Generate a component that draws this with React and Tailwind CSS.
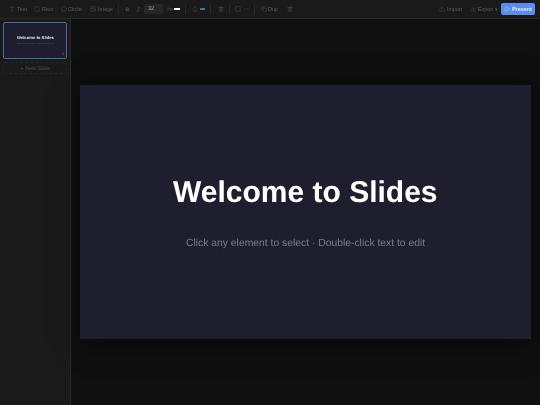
import React from 'react';
import { Type, Square, Circle, Image, Bold, Italic, Droplet, Trash2, Copy, Upload, Download, Play, ALargeSmall } from 'lucide-react';

function ToolButton({ icon: Icon, label }) {
    return (
        <button className="flex items-center gap-[1.5px] h-[14px] px-[3px] text-[5.4px] text-[#5c5c5c]">
            <Icon size={6} strokeWidth={1.5} />
            <span className="will-change-transform">{label}</span>
        </button>
    );
}

function Divider({ className }) {
    return <div className={`w-px h-[9px] bg-[#2a2a2a] ${className}`} />;
}

export default function App() {
    return (
        <div className="w-[540px] h-[405px] overflow-hidden flex flex-col bg-[#0f0f0f] font-['Liberation_Sans',sans-serif] [text-rendering:geometricPrecision]">
            {/* Toolbar */}
            <div className="h-[19px] flex items-center pl-[6px] pr-[5px] bg-[#1a1a1a] border-b border-[#2a2a2a] shrink-0">
                <div className="flex items-center gap-[2px]">
                    <ToolButton icon={Type} label="Text" />
                    <ToolButton icon={Square} label="Rect" />
                    <ToolButton icon={Circle} label="Circle" />
                    <ToolButton icon={Image} label="Image" />
                </div>
                <Divider className="ml-[2px]" />
                <Bold size={5} strokeWidth={2.5} className="text-[#5c5c5c] ml-[6px]" />
                <Italic size={5} strokeWidth={2} className="text-[#5c5c5c] ml-[6px]" />
                <div className="w-[19px] h-[10px] rounded-[2px] bg-[#262626] ml-[3px] flex items-center pl-[4px] text-[5.5px] text-[#a8a8a8]">
                    <span className="will-change-transform">32</span>
                </div>
                <ALargeSmall size={6} strokeWidth={1.5} className="text-[#5c5c5c] ml-[4px]" />
                <div className="w-[5.5px] h-[2px] bg-white ml-[1.5px]" />
                <Divider className="ml-[5.5px]" />
                <Droplet size={6} strokeWidth={1.5} className="text-[#5c5c5c] ml-[6px]" />
                <div className="w-[5.5px] h-[2px] bg-[#4a6fa5] ml-[1.5px]" />
                <Divider className="ml-[4.5px]" />
                <Trash2 size={6} strokeWidth={1.5} className="text-[#5c5c5c] ml-[7px]" />
                <Divider className="ml-[5px]" />
                <Square size={6} strokeWidth={1.5} className="text-[#5c5c5c] ml-[5.5px]" />
                <div className="w-[5.5px] h-[2px] bg-[#1e2233] ml-[2.5px]" />
                <Divider className="ml-[4.5px]" />
                <div className="ml-[3px]">
                    <ToolButton icon={Copy} label="Dup" />
                </div>
                <Trash2 size={6} strokeWidth={1.5} className="text-[#5c5c5c] ml-[5.5px]" />
                <div className="flex-1" />
                <ToolButton icon={Upload} label="Import" />
                <div className="w-[2px]" />
                <ToolButton icon={Download} label="Export ▾" />
                <button className="flex items-center gap-[1.5px] h-[12px] px-[3.5px] rounded-[2px] bg-[#5b8def] text-[#e8eefc] text-[5.4px] font-semibold">
                    <Play size={6} strokeWidth={1.5} />
                    <span className="will-change-transform">Present</span>
                </button>
            </div>

            <div className="flex-1 flex min-h-0">
                {/* Slide list */}
                <div className="w-[71px] shrink-0 bg-[#1a1a1a] border-r border-[#2a2a2a] p-[3px] flex flex-col gap-[3px]">
                    <div className="relative h-[37px] rounded-[2px] border border-[#4a6a9f] bg-[#1e1e2e] flex flex-col items-center justify-center">
                        <div className="text-[4.2px] font-bold text-[#e6e6e6] will-change-transform">Welcome to Slides</div>
                        <div className="mt-[3px] text-[1.6px] text-[#707070] will-change-transform">Click any element to select · Double-click text to edit</div>
                        <span className="absolute right-[2px] bottom-[1px] text-[3.5px] text-[#808080]">1</span>
                    </div>
                    <button className="h-[12px] rounded-[2px] border border-dashed border-[#262626] text-[5.5px] text-[#4d4d4d]">
                        <span className="will-change-transform">+ New Slide</span>
                    </button>
                </div>

                {/* Canvas */}
                <div className="flex-1 flex items-center justify-center">
                    <div className="w-[451px] h-[254px] bg-[#1e1e2e] shadow-[0_4px_24px_rgba(0,0,0,0.5)] flex flex-col items-center">
                        <h1 className="mt-[89px] text-[30px] leading-[38px] font-bold text-white will-change-transform">Welcome to Slides</h1>
                        <p className="mt-[25px] text-[10.35px] leading-[14px] text-[#7d7d85] will-change-transform">Click any element to select · Double-click text to edit</p>
                    </div>
                </div>
            </div>
        </div>
    );
}
